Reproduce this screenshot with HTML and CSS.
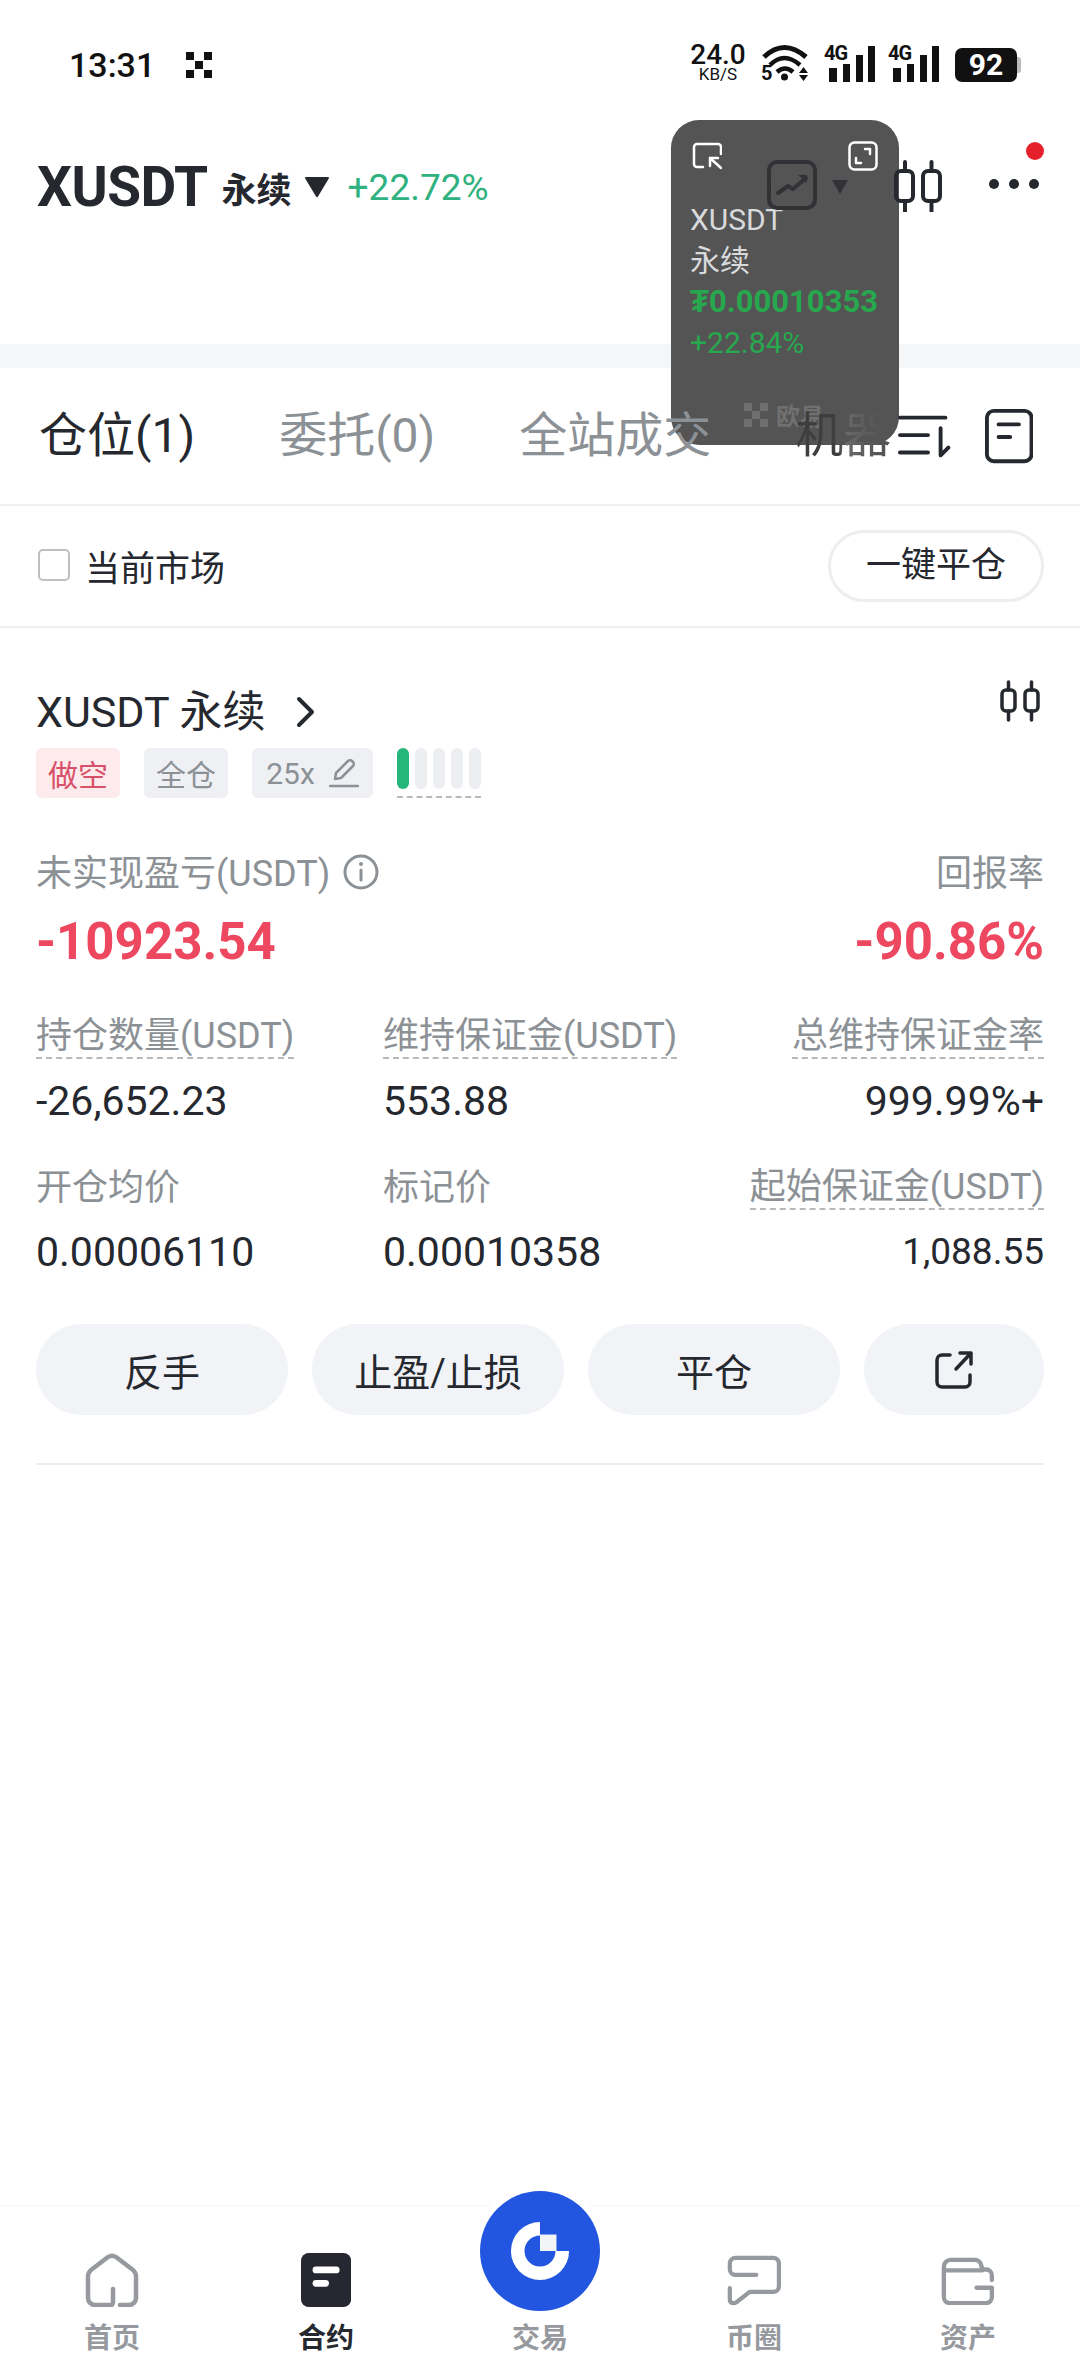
FILE: index.html
```html
<!DOCTYPE html>
<html lang="zh-CN">
<head>
    <meta charset="UTF-8">
    <title>XUSDT 永续</title>
    <link rel="stylesheet" href="styles.css">
</head>
<body>
<div class="page">
    <div class="status-bar">
        <div class="status-left">
            <span class="clock">13:31</span>
            <svg class="okx-mark" viewBox="0 0 26 26"><path d="M0 0h8v8H0zM18 0h8v8h-8zM9 9h8v8H9zM0 18h8v8H0zM18 18h8v8h-8z" fill="#111"/></svg>
        </div>
        <div class="status-right">
            <div class="speed"><span class="speed-num">24.0</span><span class="speed-unit">KB/S</span></div>
            <div class="wifi">
                <span class="wifi-five">5</span>
                <svg class="wifi-svg" viewBox="0 0 50 38" fill="none" stroke="#111" stroke-linecap="butt">
                    <path d="M3 13Q23-6 45 13" stroke-width="5"/>
                    <path d="M9 21Q23 7 39 21" stroke-width="4.500"/>
                    <path d="M16 28Q24 21 32 28" stroke-width="4.500"/>
                    <circle cx="23.500" cy="33" r="3.500" fill="#111" stroke="none"/>
                    <path d="M38 29l4.500-6 4.500 6zM38 31l4.500 6 4.500-6z" fill="#111" stroke="none"/>
                </svg>
            </div>
            <div class="signal">
                <span class="signal-tag">4G</span>
                <svg class="signal-svg" viewBox="0 0 46 36"><path d="M0 22h8v14H0zM14 18h7v18h-7zM27 9h7v27h-7zM39 0h7v36h-7z" fill="#111"/></svg>
            </div>
            <div class="signal">
                <span class="signal-tag">4G</span>
                <svg class="signal-svg" viewBox="0 0 46 36"><path d="M0 22h8v14H0zM14 18h7v18h-7zM27 9h7v27h-7zM39 0h7v36h-7z" fill="#111"/></svg>
            </div>
            <div class="battery"><span class="battery-body">92</span><span class="battery-nub"></span></div>
        </div>
    </div>

    <div class="header">
        <div class="title-group">
            <span class="symbol">XUSDT</span>
            <span class="symbol-kind">永续</span>
            <svg class="caret" viewBox="0 0 26 22"><path d="M2 1h22a1 1 0 0 1 .8 1.600L14 20.500a1.200 1.200 0 0 1-2 0L1.200 2.600A1 1 0 0 1 2 1z" fill="#25282e"/></svg>
            <span class="change">+22.72%</span>
        </div>
        <div class="header-tools">
            <svg class="chart-btn" viewBox="0 0 50 50" fill="none">
                <rect x="2" y="2" width="46" height="46" rx="8" stroke="#303236" stroke-width="4"/>
                <path d="M11 33l10-7 5 3 13-11" stroke="#303236" stroke-width="4" stroke-linecap="round" stroke-linejoin="round"/>
                <path d="M31 15h9v8z" fill="#303236"/>
            </svg>
            <svg class="chart-caret" viewBox="0 0 16 14"><path d="M0 0h16L8 14z" fill="#303236"/></svg>
            <svg class="candle-btn" viewBox="0 0 48 52" fill="none" stroke="#25282e" stroke-width="4" stroke-linecap="round">
                <rect x="2" y="11" width="17" height="30" rx="5"/><path d="M11 2v9M11 41v10"/>
                <rect x="29" y="11" width="17" height="30" rx="5"/><path d="M37.500 2v9M37.500 41v10"/>
            </svg>
            <div class="more-btn">
                <span class="more-dot"></span><span class="more-dot"></span><span class="more-dot"></span>
                <span class="red-badge"></span>
            </div>
        </div>
    </div>

    <div class="band"></div>

    <div class="tabs">
        <span class="tab tab-active">仓位(1)</span>
        <span class="tab">委托(0)</span>
        <span class="tab">全站成交</span>
        <span class="tab tab-fade">机器</span>
        <svg class="sort-icon" viewBox="0 0 54 44" fill="none" stroke="#25282e" stroke-width="4" stroke-linecap="round" stroke-linejoin="round">
            <path d="M2 2h47M2 20h29M2 38h29M44 13v28l8-8"/>
        </svg>
        <svg class="doc-icon" viewBox="0 0 50 56" fill="none" stroke="#25282e" stroke-width="4" stroke-linecap="round">
            <rect x="2" y="2" width="46" height="52" rx="7"/><path d="M14 16h21M14 29h12"/>
        </svg>
    </div>

    <div class="filter-row">
        <label class="market-check"><span class="check-box"></span>当前市场</label>
        <span class="close-all">一键平仓</span>
    </div>

    <div class="position">
        <div class="pos-head">
            <span class="pos-name">XUSDT 永续</span>
            <svg class="chevron" viewBox="0 0 20 32" fill="none"><path d="M3 3l13 13L3 29" stroke="#25282e" stroke-width="4" stroke-linecap="round" stroke-linejoin="round"/></svg>
            <svg class="pos-candle" viewBox="0 0 40 42" fill="none" stroke="#25282e" stroke-width="3.500" stroke-linecap="round">
                <rect x="2" y="10" width="13" height="21" rx="4"/><path d="M8.500 2v8M8.500 31v9"/>
                <rect x="25" y="10" width="13" height="21" rx="4"/><path d="M31.500 2v8M31.500 31v9"/>
            </svg>
        </div>
        <div class="tag-row">
            <span class="tag tag-short">做空</span>
            <span class="tag">全仓</span>
            <span class="tag tag-lever">25x
                <svg class="pencil" viewBox="0 0 30 30" fill="none" stroke="#8c9196" stroke-width="2.500" stroke-linecap="round" stroke-linejoin="round">
                    <path d="M6 21l1-6L19 3c1-1 3-1 4 0l1 1c1 1 1 3 0 4L12 20zM1 28h28"/>
                </svg>
            </span>
            <div class="risk">
                <div class="risk-bars"><i class="risk-on"></i><i></i><i></i><i></i><i></i></div>
            </div>
        </div>

        <div class="pnl-labels">
            <span class="label">未实现盈亏(USDT)
                <svg class="info" viewBox="0 0 36 36" fill="none" stroke="#8c9196" stroke-width="3"><circle cx="18" cy="18" r="16"/><path d="M18 16v10" stroke-linecap="round"/><circle cx="18" cy="10" r="2" fill="#8c9196" stroke="none"/></svg>
            </span>
            <span class="label">回报率</span>
        </div>
        <div class="pnl-values">
            <span class="pnl">-10923.54</span>
            <span class="pnl">-90.86%</span>
        </div>

        <div class="stats stats-first">
            <div class="stat"><span class="label dashed">持仓数量(USDT)</span><span class="value">-26,652.23</span></div>
            <div class="stat"><span class="label dashed">维持保证金(USDT)</span><span class="value">553.88</span></div>
            <div class="stat stat-right"><span class="label dashed">总维持保证金率</span><span class="value">999.99%+</span></div>
        </div>
        <div class="stats">
            <div class="stat"><span class="label">开仓均价</span><span class="value">0.00006110</span></div>
            <div class="stat"><span class="label">标记价</span><span class="value">0.00010358</span></div>
            <div class="stat stat-right"><span class="label dashed">起始保证金(USDT)</span><span class="value value-small">1,088.55</span></div>
        </div>

        <div class="actions">
            <span class="action">反手</span>
            <span class="action">止盈/止损</span>
            <span class="action">平仓</span>
            <span class="action action-icon">
                <svg class="share" viewBox="0 0 40 40" fill="none" stroke="#25282e" stroke-width="3.500" stroke-linecap="round" stroke-linejoin="round">
                    <path d="M16 5H8a5 5 0 0 0-5 5v22a5 5 0 0 0 5 5h23a5 5 0 0 0 5-5v-7M22 19L37 3M26 3h11v11"/>
                </svg>
            </span>
        </div>
    </div>

    <div class="spacer"></div>

    <div class="nav">
        <div class="nav-item">
            <svg class="nav-icon" viewBox="0 0 54 54" fill="none" stroke="#96999e" stroke-width="4.500" stroke-linecap="round" stroke-linejoin="round">
                <path d="M26 52H10a7 7 0 0 1-7-7V23c0-3 1-4 3-6L23 4c3-2 5-2 8 0l17 13c2 2 3 3 3 6v22a7 7 0 0 1-7 7h-9M26 52c2 0 2-2 2-4V36"/>
            </svg>
            <span class="nav-label">首页</span>
        </div>
        <div class="nav-item nav-active">
            <svg class="nav-icon" viewBox="0 0 52 56">
                <rect width="52" height="56" rx="8" fill="#252830"/>
                <rect x="12" y="14" width="28" height="7" rx="3.500" fill="#fff"/><rect x="12" y="28" width="17" height="7" rx="3.500" fill="#fff"/>
            </svg>
            <span class="nav-label">合约</span>
        </div>
        <div class="nav-item">
            <div class="trade-btn">
                <svg class="trade-logo" viewBox="0 0 64 64">
                    <path d="M32 2a30 30 0 1 0 30 30H48a16 16 0 1 1-16-16z" fill="#fff"/>
                    <path d="M32 15h17v17H32z" fill="#f3f4f6"/>
                </svg>
            </div>
            <span class="nav-label">交易</span>
        </div>
        <div class="nav-item">
            <svg class="nav-icon nav-icon-chat" viewBox="0 0 58 54" fill="none" stroke="#96999e" stroke-width="4.500" stroke-linecap="round" stroke-linejoin="round">
                <path d="M31 21H9a6 6 0 0 1-6-6V9a6 6 0 0 1 6-6h40a6 6 0 0 1 6 6v24a6 6 0 0 1-6 6H24L10 50c-3 2-7 1-7-3V35"/>
            </svg>
            <span class="nav-label">币圈</span>
        </div>
        <div class="nav-item">
            <svg class="nav-icon nav-icon-wallet" viewBox="0 0 56 50" fill="none" stroke="#96999e" stroke-width="4.500" stroke-linecap="round" stroke-linejoin="round">
                <path d="M53 24v-5a6 6 0 0 0-6-6h-4l-1-4a7 7 0 0 0-7-6H10a7 7 0 0 0-7 7v32a6 6 0 0 0 6 6h38a6 6 0 0 0 6-6V32H37M3 14h40"/>
            </svg>
            <span class="nav-label">资产</span>
        </div>
    </div>

    <!-- floating mini window -->
    <div class="float-win">
        <div class="float-top">
            <svg class="float-icon" viewBox="0 0 30 28" fill="none" stroke="#fff" stroke-width="2.500" stroke-linecap="round" stroke-linejoin="round">
                <path d="M11 25H5a3 3 0 0 1-3-3V5a3 3 0 0 1 3-3h21a3 3 0 0 1 3 3v7M29 26L18 16M18 24v-8h8"/>
            </svg>
            <svg class="float-icon" viewBox="0 0 30 30" fill="none" stroke="#fff" stroke-width="2.500" stroke-linecap="round" stroke-linejoin="round">
                <rect x="1.500" y="1.500" width="27" height="27" rx="5"/><path d="M17 8h5v5M8 17v5h5"/>
            </svg>
        </div>
        <div class="float-line float-name">XUSDT</div>
        <div class="float-line float-name">永续</div>
        <div class="float-line float-price">₮0.00010353</div>
        <div class="float-line float-pct">+22.84%</div>
        <div class="float-logo">
            <svg class="float-mark" viewBox="0 0 24 24"><path d="M0 0h8v8H0zM16 0h8v8h-8zM8 8h8v8H8zM0 16h8v8H0zM16 16h8v8h-8z" fill="#707070"/></svg>
            <span>欧易</span>
        </div>
    </div>
</div>
</body>
</html>
```

FILE: styles.css
```css
* {
    box-sizing: border-box;
}
body {
    margin: 0;
    background: #fff;
    font-family: Roboto, "Noto Sans CJK SC", sans-serif;
    color: #25282e;
}
.page {
    position: relative;
    width: 1080px;
    height: 2376px;
    display: flex;
    flex-direction: column;
    overflow: hidden;
}

/* status bar */
.status-bar {
    height: 100px;
    display: flex;
    justify-content: space-between;
    padding: 44px 59px 0 69px;
    color: #111;
}
.status-left {
    display: flex;
    align-items: flex-start;
    gap: 31px;
}
.clock {
    font-size: 34px;
    font-weight: 500;
    line-height: 42px;
}
.okx-mark {
    width: 26px;
    height: 26px;
    margin-top: 8px;
}
.status-right {
    display: flex;
    align-items: flex-start;
}
.speed {
    width: 56px;
    display: flex;
    flex-direction: column;
    align-items: center;
    margin-top: -2px;
}
.speed-num {
    font-size: 28px;
    font-weight: 500;
    line-height: 26px;
}
.speed-unit {
    font-size: 17px;
    line-height: 13px;
}
.wifi {
    position: relative;
    width: 50px;
    height: 38px;
    margin-left: 15px;
}
.wifi-svg {
    width: 50px;
    height: 38px;
    display: block;
}
.wifi-five {
    position: absolute;
    left: 0;
    bottom: -1px;
    font-size: 20px;
    font-weight: 700;
    line-height: 20px;
}
.signal {
    position: relative;
    width: 51px;
    height: 38px;
    margin-left: 13px;
    display: flex;
    justify-content: flex-end;
}
.signal-tag {
    position: absolute;
    left: 0;
    top: -1px;
    font-size: 20px;
    font-weight: 700;
    line-height: 20px;
    letter-spacing: -1px;
}
.signal-svg {
    width: 46px;
    height: 36px;
    margin-top: 2px;
}
.battery {
    display: flex;
    align-items: center;
    margin-left: 16px;
    margin-top: 4px;
}
.battery-body {
    width: 62px;
    height: 34px;
    background: #111;
    border-radius: 7px;
    color: #fff;
    font-size: 30px;
    font-weight: 700;
    line-height: 34px;
    text-align: center;
}
.battery-nub {
    width: 4px;
    height: 16px;
    background: #bbb;
    border-radius: 0 3px 3px 0;
}

/* title */
.header {
    position: relative;
    z-index: 2;
    height: 244px;
    display: flex;
    justify-content: space-between;
    padding: 60px 41px 0 37px;
}
.title-group {
    display: flex;
    align-items: center;
    height: 54px;
}
.symbol {
    font-size: 55px;
    font-weight: 700;
    letter-spacing: -0.5px;
}
.symbol-kind {
    font-size: 35px;
    font-weight: 700;
    margin-left: 14px;
}
.caret {
    width: 26px;
    height: 22px;
    margin-left: 12px;
}
.change {
    font-size: 37px;
    color: #2fb27f;
    margin-left: 18px;
}
.header-tools {
    display: flex;
    align-items: flex-start;
}
.chart-btn {
    width: 50px;
    height: 50px;
    margin-top: 0;
}
.chart-caret {
    width: 16px;
    height: 14px;
    margin: 20px 0 0 15px;
}
.candle-btn {
    width: 48px;
    height: 52px;
    margin-left: 46px;
}
.more-btn {
    position: relative;
    display: flex;
    gap: 10px;
    margin: 19px 0 0 47px;
}
.more-dot {
    width: 10px;
    height: 10px;
    border-radius: 50%;
    background: #25282e;
}
.red-badge {
    position: absolute;
    right: -5px;
    top: -37px;
    width: 18px;
    height: 18px;
    border-radius: 50%;
    background: #e5202a;
}
.band {
    height: 24px;
    background: #f5f6f7;
}

/* tabs */
.tabs {
    position: relative;
    z-index: 2;
    height: 138px;
    display: flex;
    padding: 40px 47px 0 39px;
    border-bottom: 2px solid #eff0f1;
}
.tab {
    font-size: 48px;
    line-height: 56px;
    color: #8c9196;
    margin-right: 84px;
    white-space: nowrap;
}
.tab-active {
    color: #25282e;
}
/* this tab fades out under the floating window */
.tab-fade {
    margin-right: 0;
    width: 96px;
    background:
        linear-gradient(90deg, #8c9196 45%, #e0e0e0 55%, #fff 78%) bottom / 100% 19px no-repeat,
        linear-gradient(90deg, #3e3e3e 45%, #6a6a6a 52%, #5e5e5e 70%, #545454 90%);
    -webkit-background-clip: text;
    background-clip: text;
    color: transparent;
}
.sort-icon {
    width: 54px;
    height: 44px;
    margin: 7px 0 0 7px;
}
.doc-icon {
    width: 50px;
    height: 56px;
    margin: 0 0 0 34px;
}

/* filter */
.filter-row {
    height: 122px;
    display: flex;
    align-items: center;
    justify-content: space-between;
    padding: 0 36px 0 38px;
    border-bottom: 2px solid #eff0f1;
}
.market-check {
    display: flex;
    align-items: center;
    gap: 15px;
    font-size: 35px;
    margin-bottom: 2px;
}
.check-box {
    width: 32px;
    height: 32px;
    border: 2px solid #bdbfc2;
    border-radius: 5px;
}
.close-all {
    width: 216px;
    height: 72px;
    border: 3px solid #eceef0;
    border-radius: 36px;
    font-size: 35px;
    line-height: 66px;
    text-align: center;
}

/* position card */
.position {
    padding: 0 36px;
}
.pos-head {
    position: relative;
    display: flex;
    align-items: center;
    height: 52px;
    margin-top: 58px;
}
.pos-name {
    font-size: 43px;
    line-height: 52px;
}
.chevron {
    width: 20px;
    height: 32px;
    margin-left: 30px;
}
.pos-candle {
    position: absolute;
    right: 4px;
    top: -6px;
    width: 40px;
    height: 42px;
}
.tag-row {
    display: flex;
    align-items: flex-start;
    gap: 24px;
    margin-top: 10px;
}
.tag {
    display: flex;
    align-items: center;
    justify-content: center;
    width: 84px;
    height: 50px;
    border-radius: 6px;
    background: #eef0f4;
    color: #8c9196;
    font-size: 30px;
}
.tag-short {
    background: #fdeaec;
    color: #d9506a;
}
.tag-lever {
    width: 121px;
    gap: 14px;
}
.pencil {
    width: 30px;
    height: 30px;
}
.risk {
    height: 50px;
    width: 84px;
    border-bottom: 2px dashed #b5b8bc;
}
.risk-bars {
    display: flex;
    gap: 6px;
}
.risk-bars i {
    width: 12px;
    height: 41px;
    border-radius: 6px;
    background: #eceef1;
}
.risk-bars .risk-on {
    background: #25b77a;
}
.pnl-labels {
    display: flex;
    justify-content: space-between;
    align-items: center;
    height: 44px;
    margin-top: 54px;
}
.label {
    font-size: 36px;
    line-height: 44px;
    color: #8c9196;
    white-space: nowrap;
}
.info {
    width: 36px;
    height: 36px;
    vertical-align: -4px;
    margin-left: 4px;
}
.pnl-values {
    display: flex;
    justify-content: space-between;
    margin-top: 16px;
}
.pnl {
    font-size: 51px;
    line-height: 60px;
    font-weight: 700;
    color: #ee4860;
}
.stats {
    display: grid;
    grid-template-columns: 347px 1fr 1fr;
    margin-top: 40px;
}
.stats-first {
    margin-top: 43px;
}
.stat {
    display: flex;
    flex-direction: column;
    align-items: flex-start;
}
.stat-right {
    align-items: flex-end;
}
.dashed {
    border-bottom: 2px dashed #b5b8bc;
    line-height: 42px;
}
.stat .label {
    height: 44px;
}
.value {
    font-size: 41px;
    line-height: 50px;
    margin-top: 17px;
}
.value-small {
    font-size: 37px;
}
.actions {
    display: grid;
    grid-template-columns: 252px 252px 252px 180px;
    column-gap: 24px;
    margin-top: 47px;
    padding-bottom: 48px;
    border-bottom: 2px solid #ebecee;
}
.action {
    height: 91px;
    border-radius: 46px;
    background: #f1f3f6;
    display: flex;
    align-items: center;
    justify-content: center;
    font-size: 38px;
}
.share {
    width: 40px;
    height: 40px;
}
.spacer {
    flex: 1;
}

/* bottom nav */
.nav {
    height: 171px;
    display: grid;
    grid-template-columns: repeat(5, 214px);
    grid-template-rows: 169px;
    padding-left: 5px;
    border-top: 2px solid #fafafa;
}
.nav-item {
    display: flex;
    flex-direction: column;
    align-items: center;
    justify-content: flex-end;
    padding-bottom: 20px;
}
.nav-icon {
    height: 54px;
    margin-bottom: 15px;
}
.nav-icon-chat {
    height: 51px;
    margin-bottom: 16px;
}
.nav-icon-wallet {
    height: 48px;
    margin-bottom: 17px;
}
.nav-label {
    font-size: 28px;
    line-height: 34px;
    font-weight: 700;
    color: #96999e;
}
.nav-active .nav-label {
    color: #25282e;
}
.trade-btn {
    flex-shrink: 0;
    width: 120px;
    height: 120px;
    border-radius: 50%;
    background: #2256e0;
    display: flex;
    align-items: center;
    justify-content: center;
    margin-bottom: 11px;
    box-shadow: 0 0 0 6px #fff;
}
.trade-logo {
    width: 62px;
    height: 62px;
}

/* floating window */
.float-win {
    position: absolute;
    z-index: 1;
    left: 671px;
    top: 120px;
    width: 228px;
    height: 325px;
    padding: 21px 19px 0;
    border-radius: 28px;
    background: #545454;
    display: flex;
    flex-direction: column;
}
.float-top {
    display: flex;
    justify-content: space-between;
    align-items: flex-start;
    margin: 0 2px 28px 2px;
    height: 30px;
}
.float-icon {
    width: 30px;
    height: 30px;
}
.float-line {
    font-size: 30px;
    line-height: 41px;
    white-space: nowrap;
}
.float-name {
    color: #d8dadc;
}
.float-price {
    color: #27a84f;
    font-size: 31px;
    font-weight: 700;
}
.float-pct {
    color: #27a84f;
}
.float-logo {
    position: absolute;
    left: 73px;
    top: 277px;
    display: flex;
    align-items: center;
    gap: 8px;
    font-size: 24px;
    font-weight: 700;
    color: #707070;
}
.float-mark {
    width: 24px;
    height: 24px;
}
```
